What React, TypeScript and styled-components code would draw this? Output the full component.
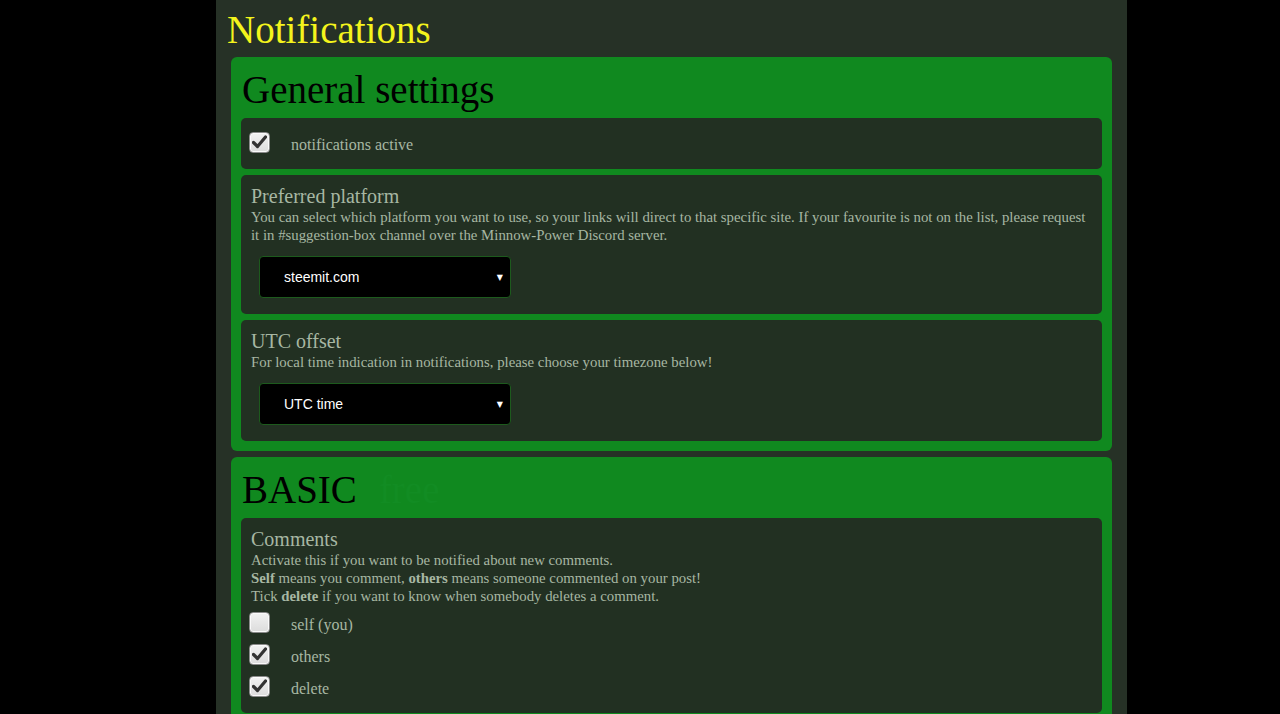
import { useState } from 'react'
import styled, { createGlobalStyle } from 'styled-components'

const GlobalStyle = createGlobalStyle({
  'html, body': {
    margin: 0,
    padding: 0,
    background: '#000',
    fontFamily: '"Liberation Serif", "Times New Roman", serif',
  },
  '::-webkit-scrollbar': { width: '0 !important', height: '0 !important' },
})

const Page = styled.div({
  display: 'flex',
  minHeight: '100vh',
})

const Column = styled.main({
  marginLeft: '216px',
  width: '911px',
  minHeight: '100vh',
  background: '#263126',
  padding: '0 15px 20px',
  boxSizing: 'border-box',
  display: 'flex',
  flexDirection: 'column',
  gap: '6px',
})

const PageTitle = styled.h1({
  margin: '7px 0 -1px -4px',
  fontSize: '39px',
  fontWeight: 'normal',
  color: '#f4f41c',
  lineHeight: 'normal',
})

const Card = styled.section({
  background: '#10891f',
  borderRadius: '6px',
  padding: '10px',
  display: 'flex',
  flexDirection: 'column',
  gap: '6px',
})

const CardTitle = styled.h2({
  margin: '0 0 0 1px',
  fontSize: '39px',
  fontWeight: 'normal',
  color: '#000',
  lineHeight: 'normal',
})

const Faint = styled.span({
  color: '#128c23',
  marginLeft: '22px',
})

const Panel = styled.div({
  background: '#223022',
  borderRadius: '5px',
  padding: '8px 6px 11px 8px',
  color: '#a7b7a3',
  fontSize: '16px',
})

const PanelTitle = styled.h3({
  margin: '2px 0 0 2px',
  fontSize: '20px',
  fontWeight: 'normal',
  lineHeight: 'normal',
})

const Text = styled.p({
  margin: '0 0 0 2px',
  fontSize: '14.8px',
  lineHeight: '18px',
  b: { fontWeight: 'bold' },
})

const SelectWrap = styled.div({
  position: 'relative',
  width: '252px',
  margin: '12px 10px 5px',
  '&::after': {
    content: '"▼"',
    position: 'absolute',
    right: '8px',
    top: '50%',
    transform: 'translateY(-50%)',
    fontSize: '8px',
    color: '#fff',
    pointerEvents: 'none',
    fontFamily: '"DejaVu Sans", sans-serif',
  },
})

const Select = styled.select({
  appearance: 'none',
  width: '100%',
  height: '42px',
  background: '#000',
  color: '#fff',
  border: '1px solid #1d5a1d',
  borderRadius: '4px',
  padding: '0 24px',
  fontFamily: '"Liberation Sans", Arial, sans-serif',
  fontSize: '14px',
  outline: 'none',
})

const CheckRow = styled.label<{ first?: boolean }>(({ first }) => ({
  display: 'flex',
  alignItems: 'center',
  gap: '21px',
  minHeight: '32px',
  marginTop: first ? '1px' : 0,
  cursor: 'pointer',
}))

const CheckLabel = styled.span({
  paddingTop: '5px',
})

const Box = styled.span({
  width: '21px',
  height: '21px',
  boxSizing: 'border-box',
  borderRadius: '4px',
  border: '1px solid #8a8a8a',
  background: 'linear-gradient(#f2f2f2, #dcdcdc)',
  boxShadow: 'inset 0 0 0 1px #fafafa',
  display: 'flex',
  alignItems: 'center',
  justifyContent: 'center',
  flexShrink: 0,
})

function Checkbox({ label, initial, first }: { label: string, initial: boolean, first?: boolean }) {
  const [checked, setChecked] = useState(initial)
  return (<CheckRow first={first} onClick={() => setChecked(!checked)}>
    <Box>
      {checked && <svg width="15" height="14" viewBox="0 0 15 14">
        <path d="M1.5 7.5 L5.5 11.5 L13.5 2" fill="none" stroke="#333" strokeWidth="3.2" strokeLinecap="round" strokeLinejoin="round" />
      </svg>}
    </Box>
    <CheckLabel>{label}</CheckLabel>
  </CheckRow>)
}

export default function App() {
  return (<Page>
    <GlobalStyle />
    <Column>
      <PageTitle>Notifications</PageTitle>

      <Card>
        <CardTitle>General settings</CardTitle>
        <Panel>
          <Checkbox label="notifications active" initial={true} />
        </Panel>
        <Panel>
          <PanelTitle>Preferred platform</PanelTitle>
          <Text>You can select which platform you want to use, so your links will direct to that specific site. If your favourite is not on the list, please request it in #suggestion-box channel over the Minnow-Power Discord server.</Text>
          <SelectWrap>
            <Select defaultValue="steemit">
              <option value="steemit">steemit.com</option>
              <option value="busy">busy.org</option>
              <option value="steempeak">steempeak.com</option>
            </Select>
          </SelectWrap>
        </Panel>
        <Panel>
          <PanelTitle>UTC offset</PanelTitle>
          <Text>For local time indication in notifications, please choose your timezone below!</Text>
          <SelectWrap>
            <Select defaultValue="0">
              <option value="0">UTC time</option>
              <option value="1">UTC +1</option>
              <option value="2">UTC +2</option>
            </Select>
          </SelectWrap>
        </Panel>
      </Card>

      <Card>
        <CardTitle>BASIC<Faint>free</Faint></CardTitle>
        <Panel>
          <PanelTitle>Comments</PanelTitle>
          <Text>
            Activate this if you want to be notified about new comments.<br />
            <b>Self</b> means you comment, <b>others</b> means someone commented on your post!<br />
            Tick <b>delete</b> if you want to know when somebody deletes a comment.
          </Text>
          <Checkbox label="self (you)" initial={false} first />
          <Checkbox label="others" initial={true} />
          <Checkbox label="delete" initial={true} />
        </Panel>
      </Card>
    </Column>
  </Page>)
}
